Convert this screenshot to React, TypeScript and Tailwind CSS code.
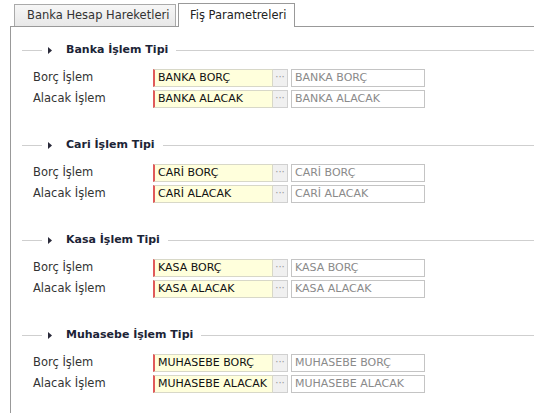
import React from "react";

const sections = [
  { title: "Banka İşlem Tipi", borc: "BANKA BORÇ", alacak: "BANKA ALACAK" },
  { title: "Cari İşlem Tipi", borc: "CARİ BORÇ", alacak: "CARİ ALACAK" },
  { title: "Kasa İşlem Tipi", borc: "KASA BORÇ", alacak: "KASA ALACAK" },
  { title: "Muhasebe İşlem Tipi", borc: "MUHASEBE BORÇ", alacak: "MUHASEBE ALACAK" },
];

function LookupRow({ label, value }: { label: string; value: string }) {
  return (
    <div className="flex items-center h-[18px]">
      <div className="w-[142px] pl-[22px] text-[#333] text-[11.5px]">{label}</div>
      <div className="flex items-stretch h-[18px] text-[11px]">
        <div className="w-[120px] bg-[#ffffdc] border border-[#d8d8c8] border-l-2 border-l-[#e05a5a] pl-[3px] flex items-center text-[#111] whitespace-nowrap overflow-hidden">
          {value}
        </div>
        <div className="w-[15px] bg-[#f0f0f0] border border-l-0 border-[#d0d0d0] flex items-center justify-center text-[#999] text-[10px] leading-none pb-[3px]">
          ···
        </div>
        <div className="ml-[3px] w-[134px] border border-[#c4c4c4] bg-white pl-[3px] flex items-center text-[#8a8a8a] whitespace-nowrap overflow-hidden">
          {value}
        </div>
      </div>
    </div>
  );
}

function Section({ title, borc, alacak }: { title: string; borc: string; alacak: string }) {
  return (
    <div className="mb-[30px]">
      <div className="flex items-center h-[14px]">
        <div className="ml-[11px] w-[20px] h-px bg-[#cfcfcf]" />
        <svg width="4" height="7" viewBox="0 0 4 7" className="ml-[6px]">
          <path d="M0 0 L4 3.5 L0 7 Z" fill="#2a2a3a" />
        </svg>
        <div className="ml-[14px] font-bold text-[#1c2436] whitespace-nowrap">{title}</div>
        <div className="ml-[8px] flex-1 h-px bg-[#cfcfcf]" />
      </div>
      <div className="mt-[12px] flex flex-col gap-[3px]">
        <LookupRow label="Borç İşlem" value={borc} />
        <LookupRow label="Alacak İşlem" value={alacak} />
      </div>
    </div>
  );
}

export default function App() {
  return (
    <div className="h-[413px] w-[534px] overflow-hidden bg-white pl-[10px] pt-[3px] font-['DejaVu_Sans',Verdana,sans-serif] text-[11px]">
      <div className="flex items-end pl-[4px] gap-[2px] text-[11.5px]">
        <div className="w-[162px] h-[22px] border border-b-0 border-[#aaa] bg-gradient-to-b from-[#f6f6f6] to-[#e8e8e8] pl-[12px] flex items-center text-[#333]">
          Banka Hesap Hareketleri
        </div>
        <div className="w-[117px] h-[24px] border border-b-0 border-[#999] bg-white pl-[11px] flex items-center text-[#222] -mb-px relative z-10">
          Fiş Parametreleri
        </div>
      </div>
      <div className="border-t border-l border-[#999] h-full pt-[16px]">
        {sections.map((s) => (
          <Section key={s.title} {...s} />
        ))}
      </div>
    </div>
  );
}
